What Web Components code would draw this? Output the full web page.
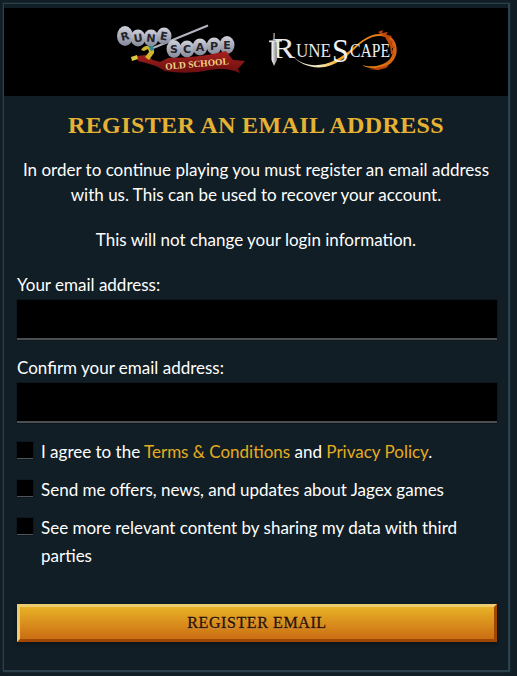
<!DOCTYPE html>
<html><head><meta charset="utf-8">
<style>
html,body{margin:0;padding:0;background:#111e25;}
body{width:517px;height:676px;overflow:hidden;font-family:"Lato","Noto Sans",sans-serif;color:#fff;}
</style></head><body>
<template id="t-panel"><style>
:host{display:block;box-sizing:border-box;width:507px;height:669px;margin:3px 0 0 3px;border:1px solid #2d414d;border-width:1px 2px 2px 1px;background:#111e25;box-shadow:0 0 0 1px #15262f}
.body{padding:0 13px}
</style><div><slot name="top"></slot></div><div class="body"><slot></slot></div></template>

<template id="t-logos"><style>
:host{display:flex;height:88px;margin-top:4px;background:#000;align-items:flex-start;padding-left:106px;gap:10px}
svg{display:block;flex:none}
.a{margin-top:7px}.b{margin-top:17px}
</style>
<svg class="a" width="140" height="70" viewBox="110 15 140 70">
<defs><linearGradient id="st" x1="0" y1="0" x2="0" y2="1"><stop offset="0" stop-color="#cfd2dc"/><stop offset="1" stop-color="#858898"/></linearGradient>
<linearGradient id="rb" x1="0" y1="0" x2="0" y2="1"><stop offset="0" stop-color="#a8221f"/><stop offset="1" stop-color="#6b0e0f"/></linearGradient></defs>
<path d="M153 48 L208 25.5" stroke="#b4b4c0" stroke-width="2" fill="none"/>
<g fill="url(#st)">
<ellipse cx="125" cy="36" rx="8" ry="10"/><ellipse cx="138" cy="38" rx="7.5" ry="8.5"/><ellipse cx="151" cy="38" rx="7.5" ry="8.5"/><ellipse cx="164" cy="36" rx="7.5" ry="8.5"/>
<ellipse cx="174" cy="49" rx="7.5" ry="9"/><ellipse cx="187" cy="49" rx="7.5" ry="8.5"/><ellipse cx="200" cy="47" rx="7.5" ry="8.5"/><ellipse cx="214" cy="46" rx="7.5" ry="8.5"/><ellipse cx="227" cy="45" rx="7.5" ry="9"/>
</g>
<g fill="#23232b" font-family="DejaVu Sans" font-weight="700" font-size="11" text-anchor="middle">
<text x="125" y="40" transform="rotate(-14 125 36)">R</text><text x="138" y="42" transform="rotate(-8 138 38)">U</text><text x="151" y="42" transform="rotate(6 151 38)">N</text><text x="164" y="40" transform="rotate(10 164 36)">E</text>
<text x="174" y="53">S</text><text x="187" y="53">C</text><text x="200" y="51">A</text><text x="214" y="50">P</text><text x="227" y="49">E</text></g>
<path d="M137 56 L146 55 L153 60 L160 62 L168 58 Q200 58 226 51 L233 60 L245 61 L238 69 L240 73 Q226 67 210 70 Q188 75 165 71 L156 66 L146 63 L138 61Z" fill="url(#rb)"/>
<path d="M131 57l6-2 1 4-6 2z" fill="#dcca45"/>
<path d="M141 50q3-5 9-4 5 2 4 7l-5 7-4-3 4-5-1-3-4 2z" fill="#d1b52e"/>
<path d="M148 46l5 0 1 4-3 1z" fill="#2c8a94"/>
<text x="197" y="67" text-anchor="middle" font-family="Liberation Serif" font-weight="700" font-size="9.5" fill="#efd68a" transform="rotate(-5 197 64)">OLD SCHOOL</text>
</svg>
<svg class="b" width="145" height="50" viewBox="260 25 145 50">
<defs><linearGradient id="sw" x1="0" y1="0" x2="1" y2="0"><stop offset="0" stop-color="#fff"/><stop offset="1" stop-color="#7f7f7f"/></linearGradient>
<linearGradient id="sg" x1="0" y1="0" x2="1" y2="0"><stop offset="0" stop-color="#cfcfcf"/><stop offset=".25" stop-color="#f3e9b8"/><stop offset=".45" stop-color="#f6a91b"/><stop offset="1" stop-color="#d5600f"/></linearGradient></defs>
<text x="272" y="58" font-family="Liberation Serif" font-size="30" fill="#e9e9ec" textLength="23" lengthAdjust="spacingAndGlyphs">R</text>
<path d="M271.5 42 L276.5 42 L277 60 L274 66 L271.5 60Z" fill="url(#sw)"/>
<path d="M269 40.5 L282 40 L282 41.6 L269 42.2Z" fill="#e2e2e2"/><path d="M273.4 33h1.4v7h-1.4z" fill="#a7a39a"/>
<path d="M293 56 C300 64 312 67 325 64 C340 60 350 50 360 42 C370 34 384 30 392 38 C399 45 398 57 391 63 C384 69 370 70 362 65 C371 68 384 66 390 59 C395 52 394 43 387 38 C378 33 367 38 359 45 C349 54 340 64 325 67 C311 69 299 64 293 56Z" fill="url(#sg)"/>
<path d="M378 32l5-2-1 3 6-1-2 3 6 1-3 3 5 3-3 1 4 5-3 0 2 7-3-1-1-8-5-9zM368 69l10 1 8-2 3-3-4 1-10 2z" fill="#c0470c"/>
<text x="296" y="57" font-family="Liberation Serif" font-size="19" fill="#e9e9ec" textLength="35" lengthAdjust="spacingAndGlyphs">UNE</text>
<text x="332" y="62" font-family="Liberation Serif" font-size="34" fill="#f2f2f2" textLength="17" lengthAdjust="spacingAndGlyphs">S</text>
<text x="350" y="57" font-family="Liberation Serif" font-size="19" fill="#ececef" textLength="40" lengthAdjust="spacingAndGlyphs">CAPE</text>
</svg></template>

<template id="t-title"><style>
:host{display:block;margin:16px 0 0;text-align:center;font:700 24px/26px "Liberation Serif",serif;color:#e6b233;letter-spacing:.4px;height:26px;white-space:nowrap}
h1{all:unset;display:block}
</style><h1><slot></slot></h1></template>

<template id="t-para"><style>
:host{display:block;text-align:center;font-size:17px;line-height:25px;color:#fff;margin-top:var(--mt,18px)}
</style><slot></slot></template>

<template id="t-field"><style>
:host{display:block;margin-top:var(--mt,0)}
label{display:block;font-size:17px;line-height:20px;color:#fff;margin-bottom:5px}
.b{box-sizing:border-box;height:40px;width:480px;background:#000;border-bottom:2px solid #4b4f52;box-shadow:0 0 0 1px #0d171d}
</style><label><slot></slot></label><div class="b"></div></template>

<template id="t-check"><style>
:host{display:flex;align-items:flex-start;gap:8px;font-size:17px;line-height:28px;color:#fff;margin-top:var(--mt,0)}
.c{flex:none;box-sizing:border-box;width:16px;height:17px;margin-top:4px;background:#000;border-bottom:1px solid #50555a;box-shadow:0 0 0 1px #0d171d}
</style><span class="c"></span><span><slot></slot></span></template>

<template id="t-link"><style>
:host{display:inline;color:#e6ac1f}
a{color:inherit;text-decoration:none}
</style><a href="#"><slot></slot></a></template>

<template id="t-btn"><style>
:host{display:block;margin-top:34px}
button{display:block;box-sizing:border-box;width:480px;height:38px;padding:0;border:3px solid;border-color:#edcd70 #a04701 #a04701 #edcd70;background:linear-gradient(#e8b126,#cb6d14);font:400 16px/1 "Liberation Serif",serif;color:#2b1005;letter-spacing:.6px;-webkit-text-stroke:.3px #2b1005;text-shadow:0 1px 0 rgba(255,255,255,.25);box-shadow:0 2px 4px rgba(0,0,0,.35)}
</style><button><slot></slot></button></template>

<reg-panel>
  <reg-logos slot="top"></reg-logos>
  <reg-title>REGISTER AN EMAIL ADDRESS</reg-title>
  <reg-para style="--mt:19px">In order to continue playing you must register an email address with us. This can be used to recover your account.</reg-para>
  <reg-para style="--mt:20px">This will not change your login information.</reg-para>
  <reg-field style="--mt:23px">Your email address:</reg-field>
  <reg-field style="--mt:18px">Confirm your email address:</reg-field>
  <reg-check style="--mt:15px">I agree to the <reg-link>Terms &amp; Conditions</reg-link> and <reg-link>Privacy Policy</reg-link>.</reg-check>
  <reg-check style="--mt:10px">Send me offers, news, and updates about Jagex games</reg-check>
  <reg-check style="--mt:10px">See more relevant content by sharing my data with third parties</reg-check>
  <reg-btn>REGISTER EMAIL</reg-btn>
</reg-panel>
<script>
for (const [tag,id] of [['reg-panel','t-panel'],['reg-logos','t-logos'],['reg-title','t-title'],['reg-para','t-para'],['reg-field','t-field'],['reg-check','t-check'],['reg-link','t-link'],['reg-btn','t-btn']]) {
  customElements.define(tag, class extends HTMLElement{
    constructor(){super();this.attachShadow({mode:'open'}).appendChild(document.getElementById(id).content.cloneNode(true));}
  });
}
</script>
</body></html>
